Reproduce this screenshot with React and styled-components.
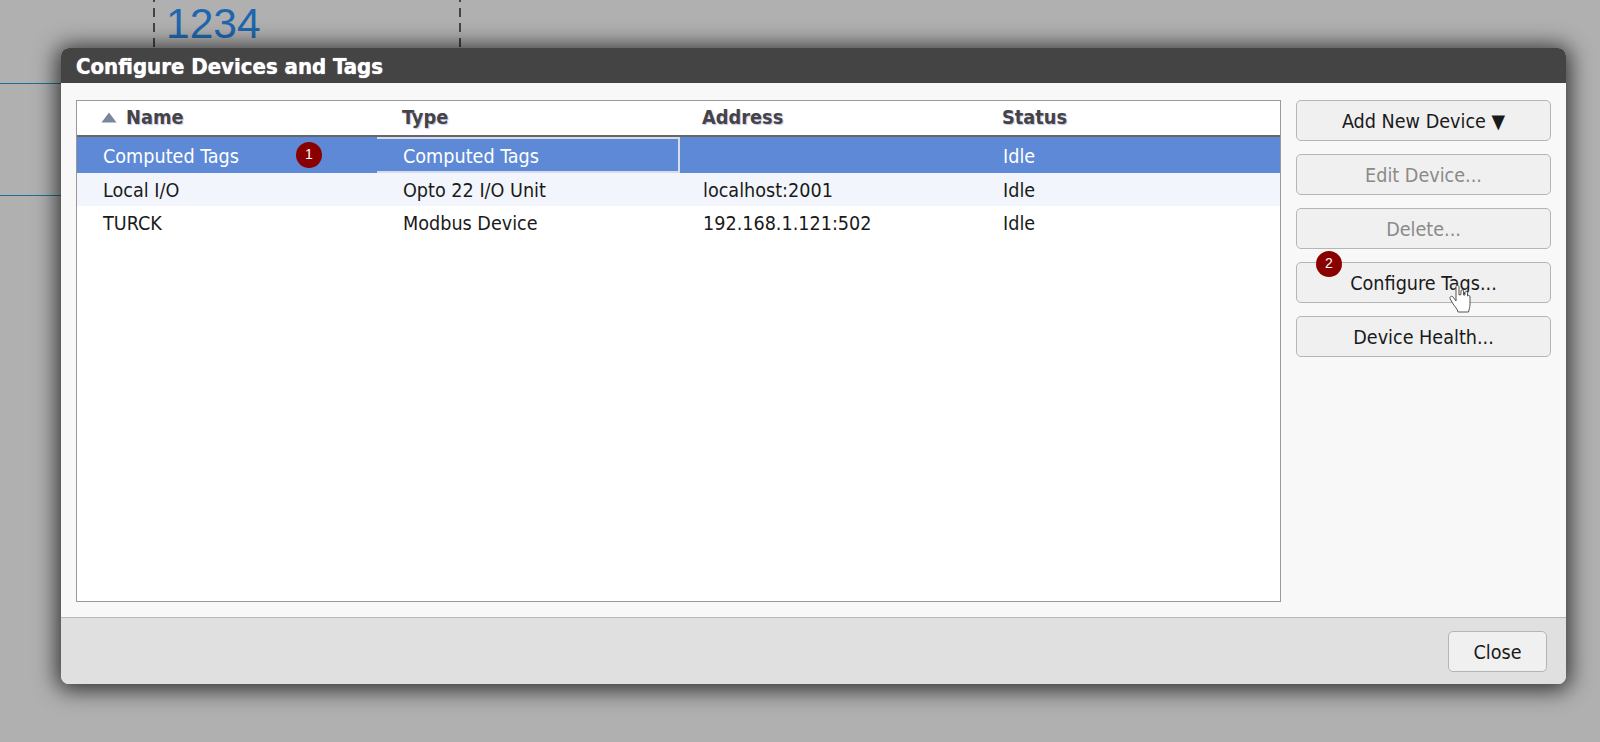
import React from "react";
import styled, { createGlobalStyle } from "styled-components";

const Global = createGlobalStyle`
  html, body { margin: 0; padding: 0; height: 100%; overflow: hidden; }
  body { font-family: "DejaVu Sans Condensed", "DejaVu Sans", sans-serif; }
`;
const Page = styled.div`
  position: relative; width: 1600px; height: 742px; overflow: hidden; background: #b0b0b0;
`;
const HLine = styled.div`
  position: absolute; left: 0; width: 70px; height: 1px; top: ${p => p.$y}px; background: #1c6f96;
`;
const DashLine = styled.div`
  position: absolute; top: 0; width: 2px; height: 50px; left: ${p => p.$x}px;
  background: linear-gradient(to bottom, #444 0 9px, transparent 9px 15px) 0 8px / 2px 15px repeat-y;
`;
const BigNumber = styled.div`
  position: absolute; left: 166px; top: 0; font: 42.5px "Liberation Sans", sans-serif; color: #1f66ae;
`;
const Modal = styled.div`
  position: absolute; left: 61px; top: 48px; width: 1505px; height: 636px;
  display: flex; flex-direction: column; border-radius: 8px; background: #f8f8f8;
  box-shadow: 0 2px 22px 4px rgba(0, 0, 0, 0.72);
`;
const TitleBar = styled.div`
  height: 35px; flex: none; box-sizing: border-box; padding-left: 15px; border-radius: 8px 8px 0 0;
  background: #444444; color: #fff; font-size: 22px; font-weight: 700; line-height: 37px;
  text-shadow: 0 0 1px #fff;
`;
const Body = styled.div`
  flex: 1; display: flex; gap: 15px; box-sizing: border-box; padding: 17px 15px 15px 15px;
  min-height: 0;
`;
const Table = styled.div`
  width: 1205px; flex: none; box-sizing: border-box; background: #fff; border: 1px solid #999;
`;
const HeaderRow = styled.div`
  display: grid; grid-template-columns: repeat(4, 300px); height: 34px; border-bottom: 2px solid #666;
  align-items: center; color: #444; font-size: 19.8px; font-weight: 700;
  text-shadow: 1px 1px 1px #c4c4ee;
`;
const HeaderCell = styled.div`
  display: flex; align-items: center; padding: 0 0 2px 25px; gap: 9px;
`;
const SortArrow = styled.svg`width: 16px; height: 11px; flex: none; margin-left: -1px;`;
const Row = styled.div`
  display: grid; grid-template-columns: repeat(4, 300px); height: ${p => p.$h}px; align-items: center;
  font-size: 19.6px; position: relative;
  color: ${p => (p.$selected ? "#fff" : "#1a1a1a")};
  background: ${p => (p.$selected ? "#5e89d6" : p.$alt ? "#f2f6fc" : "#fff")};
`;
const Cell = styled.div`
  padding: 2px 0 0 26px; height: 100%; display: flex; align-items: center; box-sizing: border-box; white-space: nowrap;
`;
const FocusCell = styled(Cell)`
  width: 303px; border-right: 2px solid #d5ddeb;
  border-top: 2px solid #d5ddeb; border-bottom: 2px solid #d5ddeb;
`;
const Badge = styled.span`
  position: absolute; left: ${p => p.$x}px; top: ${p => p.$y}px; width: 26px; height: 26px; border-radius: 50%;
  background: #8a0000; color: #fff; font: 14px/25px "Liberation Sans", sans-serif; text-align: center;
`;
const Side = styled.div`
  flex: 1; display: flex; flex-direction: column; gap: 13px; position: relative;
`;
const Btn = styled.div`
  box-sizing: border-box; height: 41px; padding-top: 2px; display: flex; align-items: center; justify-content: center;
  border: 1px solid #b5b5b5; border-radius: 5px; background: #f0f0f0; font-size: 19.6px;
  color: ${p => (p.$disabled ? "#8a8a8a" : "#1a1a1a")};
  width: ${p => p.$w || "255px"}; position: relative; white-space: pre;
`;
const Footer = styled.div`
  height: 67px; flex: none; box-sizing: border-box; display: flex; align-items: flex-start; justify-content: flex-end;
  padding: 13px 19px 0 0; background: #e0e0e0; border-top: 1px solid #b9b9b9; border-radius: 0 0 8px 8px;
`;
const Hand = styled.svg`position: absolute; left: 152px; top: 21px; width: 22px; height: 30px;`;

const rows = [
  { name: "Local I/O", type: "Opto 22 I/O Unit", addr: "localhost:2001", status: "Idle", alt: true, h: 33 },
  { name: "TURCK", type: "Modbus Device", addr: "192.168.1.121:502", status: "Idle", h: 33 },
];

export default function App() {
  return (
    <Page>
      <Global />
      <HLine $y={83} />
      <HLine $y={195} />
      <DashLine $x={153} />
      <DashLine $x={459} />
      <BigNumber>1234</BigNumber>
      <Modal>
        <TitleBar>Configure Devices and Tags</TitleBar>
        <Body>
          <Table>
            <HeaderRow>
              <HeaderCell>
                <SortArrow viewBox="0 0 16 11"><path d="M8 0.5 L15.5 10.5 H0.5 Z" fill="#7a8699" /></SortArrow>
                Name
              </HeaderCell>
              <HeaderCell>Type</HeaderCell>
              <HeaderCell>Address</HeaderCell>
              <HeaderCell>Status</HeaderCell>
            </HeaderRow>
            <Row $selected $h={36}>
              <Cell>Computed Tags</Cell>
              <FocusCell>Computed Tags</FocusCell>
              <Cell />
              <Cell>Idle</Cell>
              <Badge $x={219} $y={5}>1</Badge>
            </Row>
            {rows.map(r => (
              <Row key={r.name} $alt={r.alt} $h={r.h}>
                <Cell>{r.name}</Cell>
                <Cell>{r.type}</Cell>
                <Cell>{r.addr}</Cell>
                <Cell>{r.status}</Cell>
              </Row>
            ))}
          </Table>
          <Side>
            <Btn>Add New Device ▼</Btn>
            <Btn $disabled>Edit Device...</Btn>
            <Btn $disabled>Delete...</Btn>
            <Btn>
              Configure Tags...
              <Badge $x={19} $y={-12}>2</Badge>
              <Hand viewBox="0 0 22 30">
                <path d="M7 3 C7 1 10 1 10 3 V11 L12 10.500 V7 C12 5.500 14.500 5.500 14.500 7 V11 L16 11 V8.500 C16 7 18.500 7 18.500 8.500 V12 C19 11 21 11 21 13 V20 C21 24 20 25 19.500 28 H9 C8.500 25 6 23 3.500 19 L1 14.500 C0.500 12.500 3 11.500 4 13 L7 17 Z" fill="#fff" stroke="#555" strokeWidth="1" strokeLinejoin="round" />
              </Hand>
            </Btn>
            <Btn>Device Health...</Btn>
          </Side>
        </Body>
        <Footer>
          <Btn $w="99px">Close</Btn>
        </Footer>
      </Modal>
    </Page>
  );
}
